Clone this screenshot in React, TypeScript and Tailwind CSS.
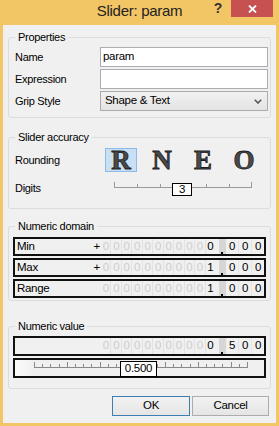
import React from "react";

function Group({ title, className, children }: { title: string; className?: string; children: React.ReactNode }) {
  return (
    <fieldset className={`border border-[#dcdcdc] rounded-[3px] ${className ?? ""}`}>
      <legend className="ml-[6px] px-[3px] leading-[14px]">{title}</legend>
      {children}
    </fieldset>
  );
}

function DigitRow({ label, plus, intDigit, frac }: { label?: string; plus?: boolean; intDigit: string; frac: string[] }) {
  const dim = Array.from({ length: 10 });
  return (
    <div className="h-[19px] border-2 border-[#111] flex items-stretch">
      <div className="w-[86px] flex items-center justify-between pl-[2px] pr-[1px]">
        <span>{label}</span>
        <span>{plus ? "+" : ""}</span>
      </div>
      <div className="w-[114px] flex">
        {dim.map((_, i) => (
          <div key={i} className="flex-1 flex items-center justify-center text-[#cdcdcd] border-r border-[#e2e2e2]">
            0
          </div>
        ))}
        <div className="flex-1 flex items-center justify-center text-black">{intDigit}</div>
      </div>
      <div className="w-[11px] flex pl-[4px]">
        <div className="flex-1 bg-[#d6d6d6] flex flex-col justify-end">
          <div className="w-[2px] h-[2px] bg-black ml-[2px]" />
        </div>
      </div>
      <div className="flex-1 flex">
        {frac.map((d, i) => (
          <div key={i} className={`flex-1 flex items-center justify-center text-black ${i < 2 ? "border-r border-[#e4e4e4]" : ""}`}>
            {d}
          </div>
        ))}
      </div>
    </div>
  );
}

export default function App() {
  const digitTicks = [0, 1, 2, 3, 4, 5, 6];
  const valueTicks = Array.from({ length: 27 }, (_, i) => i);

  return (
    <div className="w-[279px] h-[426px] bg-[#f2c565] flex flex-col font-['Liberation_Sans',Arial,sans-serif] text-[11px] tracking-[-0.3px] text-black overflow-hidden">
      {/* Title bar */}
      <div className="h-[25px] grid grid-cols-[1fr_auto_1fr] shrink-0">
        <div />
        <div className="pt-[1px] text-[15px] leading-[20px] tracking-[-0.3px] text-[#222]">Slider: param</div>
        <div className="flex justify-end items-start pr-[6px]">
          <div className="mr-[9px] text-[14px] leading-[16px] font-bold text-[#333]">?</div>
          <div className="w-[42px] h-[17px] bg-[#c75050] flex items-center justify-center">
            <svg width="9" height="8" viewBox="0 0 9 8">
              <path d="M1 0.5 L8 7.5 M8 0.5 L1 7.5" stroke="#fff" strokeWidth="1.8" />
            </svg>
          </div>
        </div>
      </div>

      {/* Client area */}
      <div className="flex-1 mx-[3px] mb-[3px] bg-[#f0f0f0] px-[5px] flex flex-col">
        <Group title="Properties" className="mt-[5px]">
          <div className="grid grid-cols-[85px_1fr] gap-y-[2px] pl-[6px] pr-[2px] pt-[3px] pb-[6px]">
            <div className="h-[20px] flex items-center">Name</div>
            <div className="h-[20px] border border-[#abadb3] bg-white flex items-center pl-[2px] text-[11.5px]">param</div>
            <div className="h-[20px] flex items-center">Expression</div>
            <div className="h-[20px] border border-[#abadb3] bg-white" />
            <div className="h-[20px] flex items-center">Grip Style</div>
            <div className="h-[20px] border border-[#acacac] bg-gradient-to-b from-[#f2f2f2] to-[#e3e3e3] flex items-center justify-between pl-[4px] pr-[5px] text-[11.5px]">
              <span>Shape &amp; Text</span>
              <svg width="8" height="5" viewBox="0 0 8 5">
                <path d="M0.8 0.8 L4 4 L7.2 0.8" stroke="#555" strokeWidth="1.6" fill="none" />
              </svg>
            </div>
          </div>
        </Group>

        <Group title="Slider accuracy" className="mt-[12px]">
          <div className="grid grid-cols-[85px_1fr] gap-y-[7px] pl-[6px] pr-[2px] pt-[4px] pb-[10px]">
            <div className="h-[24px] flex items-center">Rounding</div>
            <div className="h-[24px] flex ml-[5px] gap-[9px] font-['Liberation_Serif',serif] font-bold text-[27px] leading-none tracking-normal text-[#4a4a4a] [-webkit-text-stroke:0.8px_#1c1c1c]">
              <div className="w-[32px] flex items-center justify-center bg-[#c9e0f4] border border-[#8dbbe6]">R</div>
              <div className="w-[32px] flex items-center justify-center">N</div>
              <div className="w-[32px] flex items-center justify-center">E</div>
              <div className="w-[32px] flex items-center justify-center">O</div>
            </div>
            <div className="h-[19px] flex items-center">Digits</div>
            <div className="h-[19px] relative ml-[14px] w-[138px]">
              <div className="absolute left-0 right-0 top-[8px] h-[1px] bg-[#9a9a9a]" />
              {digitTicks.map((t) => (
                <div
                  key={t}
                  className={`absolute w-[1px] bg-[#9a9a9a] ${t === 0 || t === 6 ? "top-[3px] h-[5px]" : "top-[5px] h-[3px]"} ${
                    ["left-0", "left-[23px]", "left-[46px]", "left-[69px]", "left-[92px]", "left-[115px]", "left-[137px]"][t]
                  }`}
                />
              ))}
              <div className="absolute left-[58px] top-[4px] w-[20px] h-[13px] border border-black bg-white flex items-center justify-center text-[11.5px] leading-none">
                3
              </div>
            </div>
          </div>
        </Group>

        <Group title="Numeric domain" className="mt-[10px]">
          <div className="flex flex-col gap-[2px] pl-[4px] pr-[4px] pt-[4px] pb-[2px] text-[11.5px]">
            <DigitRow label="Min" plus intDigit="0" frac={["0", "0", "0"]} />
            <DigitRow label="Max" plus intDigit="1" frac={["0", "0", "0"]} />
            <DigitRow label="Range" intDigit="1" frac={["0", "0", "0"]} />
          </div>
        </Group>

        <Group title="Numeric value" className="mt-[18px]">
          <div className="flex flex-col gap-[2px] pl-[4px] pr-[4px] pt-[3px] pb-[10px] text-[11.5px]">
            <div className="[&>div]:h-[20px]">
              <DigitRow intDigit="0" frac={["5", "0", "0"]} />
            </div>
            <div className="h-[20px] border-2 border-[#111] bg-[linear-gradient(to_right,#fafafa_0px,#f3f3f3_16px,#f0f0f0_17px)]">
              <div className="relative h-full">
                <div className="absolute left-[19px] w-[214px] top-[7px] h-[1px] bg-[#8a8a8a]" />
                {valueTicks.map((t) => (
                  <div
                    key={t}
                    className={`absolute w-[1px] bg-[#8a8a8a] ${t % 4 === 0 || t === 26 ? "top-[2px] h-[5px]" : "top-[4px] h-[3px]"}`}
                    style={{ left: 19 + Math.round((t * 213) / 26) }}
                  />
                ))}
                <div className="absolute left-[105px] top-[1px] w-[37px] h-[16px] border border-black bg-white flex items-center justify-center leading-none">
                  0.500
                </div>
              </div>
            </div>
          </div>
        </Group>

        <div className="mt-[7px] flex justify-end gap-[2px] pr-[2px] text-[11.5px]">
          <button className="w-[78px] h-[20px] border border-[#3c7fb1] bg-gradient-to-b from-[#f2f2f2] to-[#e5e5e5]">OK</button>
          <button className="w-[77px] h-[20px] border border-[#acacac] bg-gradient-to-b from-[#f2f2f2] to-[#e5e5e5]">Cancel</button>
        </div>
      </div>
    </div>
  );
}
